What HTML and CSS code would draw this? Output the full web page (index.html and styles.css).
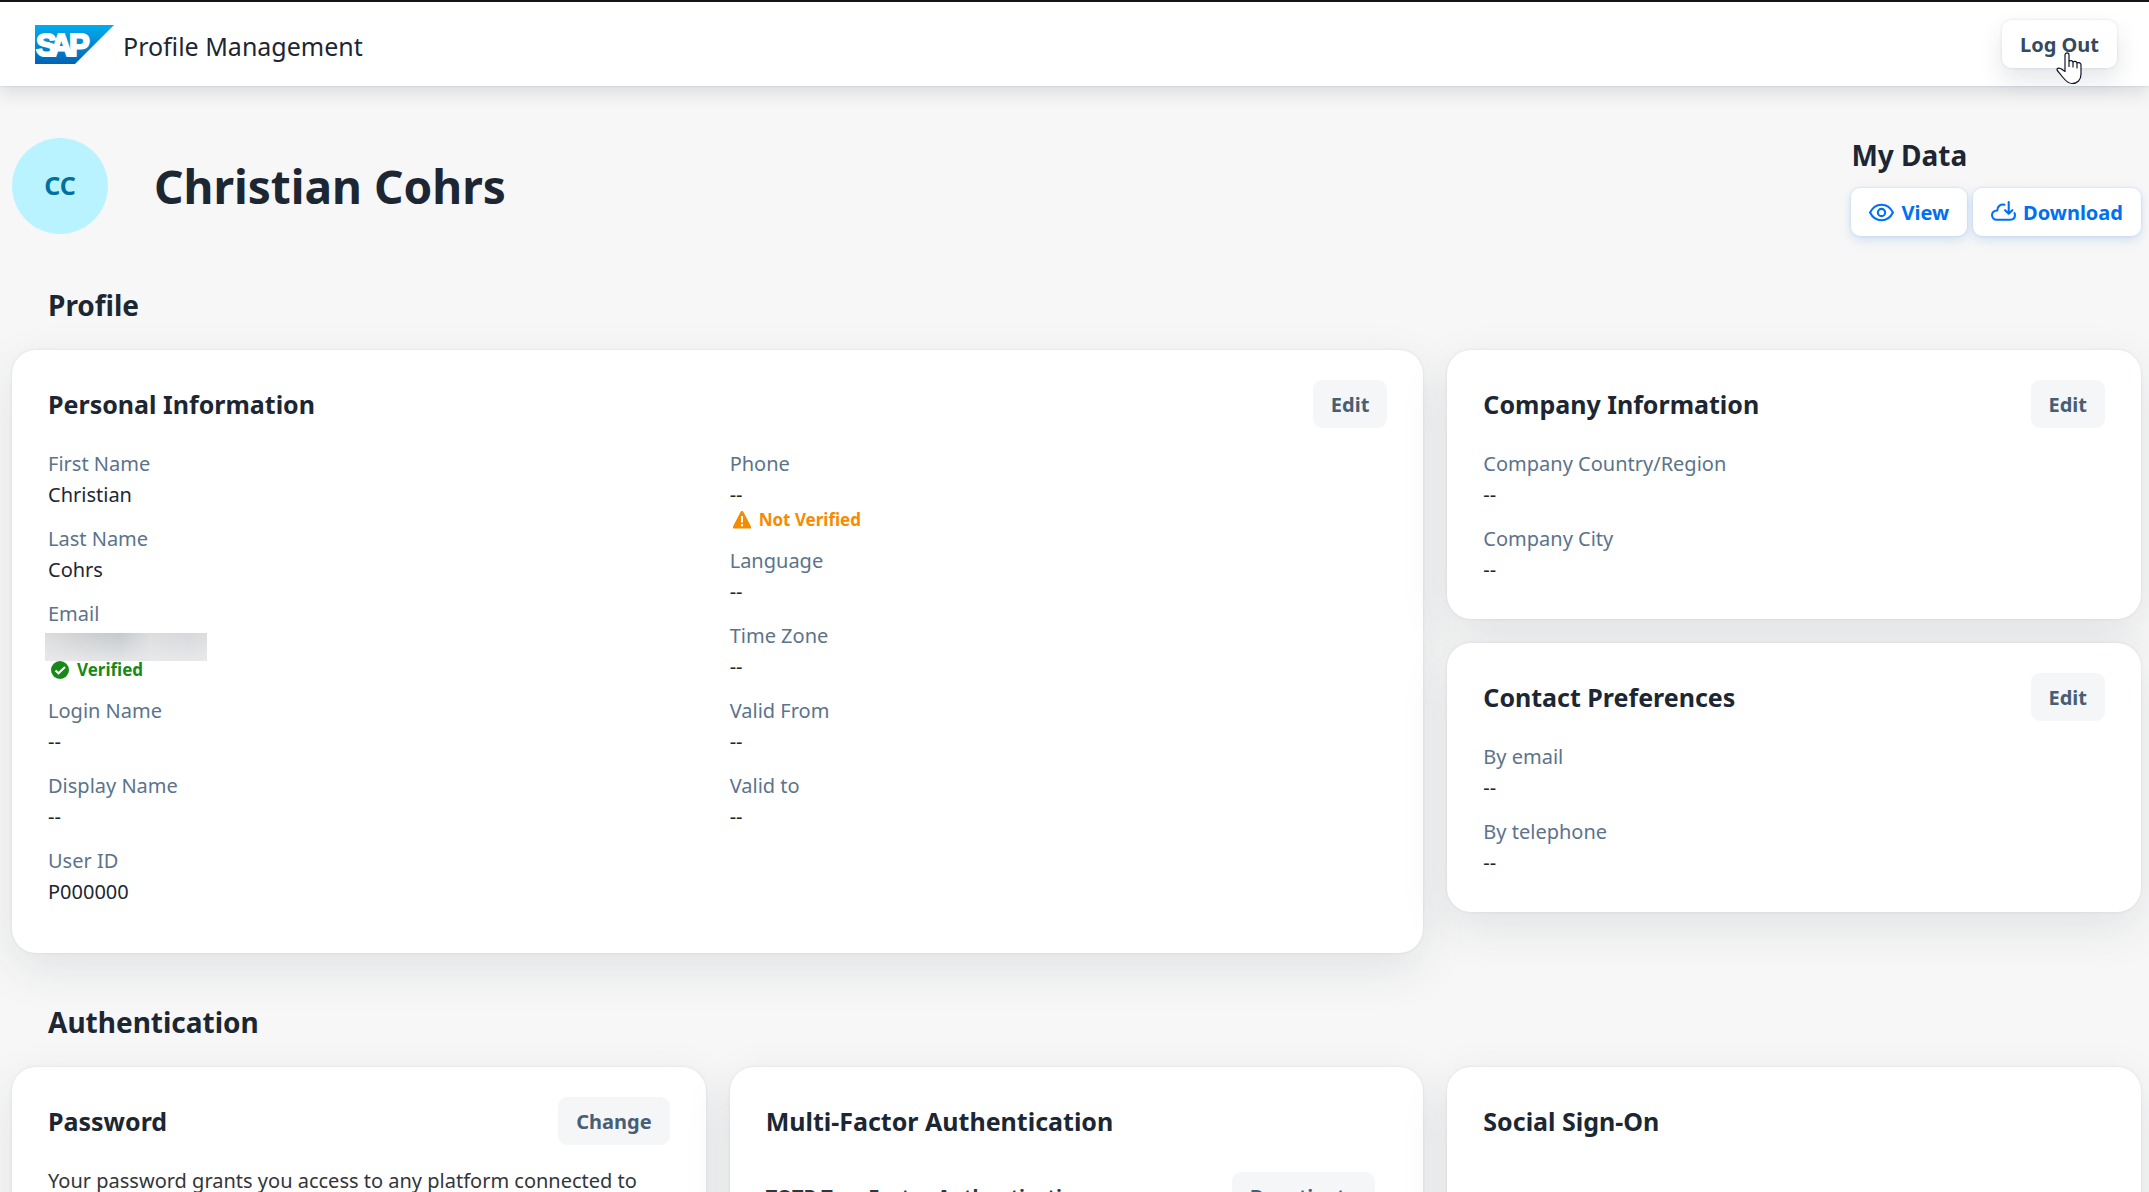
FILE: index.html
```html
<!DOCTYPE html>
<html lang="en">
<head>
<meta charset="utf-8">
<meta name="viewport" content="width=device-width, initial-scale=1">
<title>Profile Management</title>
<link rel="stylesheet" href="styles.css">
</head>
<body>
<header class="shell">
  <div class="brand">
    <svg class="logo" viewBox="0 0 79 39" role="img" aria-label="SAP">
      <defs>
        <linearGradient id="logo-fill" x1="0" y1="0" x2="0" y2="1">
          <stop offset="0" stop-color="#00aeef"/>
          <stop offset="0.5" stop-color="#0089d3"/>
          <stop offset="1" stop-color="#0062b3"/>
        </linearGradient>
      </defs>
      <path d="M0 0H79L40 39H0Z" fill="url(#logo-fill)"/>
      <text class="logo-text" x="1 15 34" y="31">SAP</text>
    </svg>
    <span class="product">Profile Management</span>
  </div>
  <button class="btn btn-raised" type="button">Log Out</button>
  <svg class="pointer" viewBox="0 0 26 33" aria-hidden="true">
    <path d="M9 20V3C9 .200 13 .200 13 3V14.500V9.500C13.500 8 17 8.300 17 10.500V15V10.500C17.500 8.800 21 9 21 11.500V16V11.500C21.500 9.800 25 10.500 25 13V22C25 28 21.500 31.500 16 31.500C12 31.500 9 28 7 25.500L1.300 18.500C.300 16.500 2.500 15.500 4.500 16.500L9 19.500" fill="#fff" stroke="#15152b" stroke-width="1.200" stroke-linejoin="round"/>
  </svg>
</header>

<main class="page">
  <div class="intro">
    <div class="identity">
      <span class="avatar" aria-hidden="true">CC</span>
      <h1 class="name">Christian Cohrs</h1>
    </div>
    <section class="my-data" aria-labelledby="my-data">
      <h2 class="heading" id="my-data">My Data</h2>
      <div class="actions">
        <button class="btn btn-action" type="button">
          <svg class="icon" viewBox="0 0 24 24" aria-hidden="true"><path d="M1 12C3.500 7 7.500 4.500 12 4.500S20.500 7 23 12C20.500 17 16.500 19.500 12 19.500S3.500 17 1 12Z"/><circle cx="12" cy="12" r="3.500"/></svg>
          View
        </button>
        <button class="btn btn-action" type="button">
          <svg class="icon" viewBox="0 0 24 24" aria-hidden="true"><path d="M13 4.500C9.500 3.500 6 6 6 10C3 10 1 12 1 14.500S3 19 5.500 19H18.500C21.500 19 23 17 23 14.500C23 13.500 22.800 13 22.500 12.500M17 2V13M13.500 9.800L17 13.200L20.500 9.800"/></svg>
          Download
        </button>
      </div>
    </section>
  </div>

  <section class="section" aria-labelledby="profile">
    <h2 class="heading section-heading" id="profile">Profile</h2>
    <div class="grid">
      <article class="card card-wide">
        <div class="card-head">
          <h3 class="card-title">Personal Information</h3>
          <button class="btn" type="button">Edit</button>
        </div>
        <div class="columns">
          <dl class="fields">
            <div class="field"><dt>First Name</dt><dd>Christian</dd></div>
            <div class="field"><dt>Last Name</dt><dd>Cohrs</dd></div>
            <div class="field">
              <dt>Email</dt>
              <dd><span class="redacted"></span></dd>
              <dd class="status status-ok">
                <svg class="status-icon" viewBox="0 0 18 18" aria-hidden="true"><circle cx="9" cy="9" r="9" fill="currentColor"/><path d="M4.500 9.500L7.500 12.300L14 6" fill="none" stroke="#fff" stroke-width="2"/></svg>
                Verified
              </dd>
            </div>
            <div class="field"><dt>Login Name</dt><dd>--</dd></div>
            <div class="field"><dt>Display Name</dt><dd>--</dd></div>
            <div class="field"><dt>User ID</dt><dd>P000000</dd></div>
          </dl>
          <dl class="fields">
            <div class="field">
              <dt>Phone</dt>
              <dd>--</dd>
              <dd class="status status-warn">
                <svg class="status-icon" viewBox="0 0 18 18" aria-hidden="true"><path d="M9 0C9.800 0 10.200 .400 10.600 1.200L17.700 15C18.500 16.800 17.800 17.500 16.500 17.500H1.500C.200 17.500-.500 16.800 .300 15L7.400 1.200C7.800 .400 8.200 0 9 0Z" fill="currentColor"/><path d="M9 5V11.500M9 13V15.200" stroke="#fff" stroke-width="2"/></svg>
                Not Verified
              </dd>
            </div>
            <div class="field"><dt>Language</dt><dd>--</dd></div>
            <div class="field"><dt>Time Zone</dt><dd>--</dd></div>
            <div class="field"><dt>Valid From</dt><dd>--</dd></div>
            <div class="field"><dt>Valid to</dt><dd>--</dd></div>
          </dl>
        </div>
      </article>

      <div class="stack">
        <article class="card">
          <div class="card-head">
            <h3 class="card-title">Company Information</h3>
            <button class="btn" type="button">Edit</button>
          </div>
          <dl class="fields">
            <div class="field"><dt>Company Country/Region</dt><dd>--</dd></div>
            <div class="field"><dt>Company City</dt><dd>--</dd></div>
          </dl>
        </article>
        <article class="card">
          <div class="card-head">
            <h3 class="card-title">Contact Preferences</h3>
            <button class="btn" type="button">Edit</button>
          </div>
          <dl class="fields">
            <div class="field"><dt>By email</dt><dd>--</dd></div>
            <div class="field"><dt>By telephone</dt><dd>--</dd></div>
          </dl>
        </article>
      </div>
    </div>
  </section>

  <section class="section" aria-labelledby="authentication">
    <h2 class="heading section-heading" id="authentication">Authentication</h2>
    <div class="grid">
      <article class="card">
        <div class="card-head">
          <h3 class="card-title">Password</h3>
          <button class="btn" type="button">Change</button>
        </div>
        <p class="text">Your password grants you access to any platform connected to</p>
      </article>
      <article class="card">
        <div class="card-head">
          <h3 class="card-title">Multi-Factor Authentication</h3>
        </div>
        <div class="method">
          <h4 class="method-name">TOTP Two-Factor Authentication</h4>
          <button class="btn" type="button">Deactivate</button>
        </div>
      </article>
      <article class="card">
        <div class="card-head">
          <h3 class="card-title">Social Sign-On</h3>
        </div>
      </article>
    </div>
  </section>
</main>
</body>
</html>
```
FILE: styles.css
```css
:root {
  --ink: #1c2733;
  --label: #5b738b;
  --button-ink: #475e75;
  --accent: #0070f2;
  --page: #f7f7f7;
}

* {
  box-sizing: border-box;
}

body {
  margin: 0;
  height: 100vh;
  overflow: hidden;
  background: var(--page);
  color: var(--ink);
  font: 400 20px/31px "Noto Sans", sans-serif;
}

h1, h2, h3, h4, p, dl, dd {
  margin: 0;
}

/* Top bar */
.shell {
  position: relative;
  display: flex;
  align-items: center;
  justify-content: space-between;
  height: 86px;
  padding: 0 32px 0 35px;
  border-top: 2px solid #15131c;
  background: #fff;
  box-shadow: 0 0 2px rgba(34, 53, 72, 0.2), 0 8px 16px rgba(34, 53, 72, 0.12);
}

.brand {
  display: flex;
  align-items: center;
  gap: 9px;
}

.logo {
  width: 79px;
  height: 39px;
}

.logo-text {
  fill: #fff;
  stroke: #fff;
  stroke-width: 2px;
  font: 700 31px "Liberation Sans", sans-serif;
}

.product {
  padding-top: 4px;
  font-size: 25px;
}

.pointer {
  position: absolute;
  top: 50px;
  right: 67px;
  width: 26px;
  height: 33px;
}

/* Buttons */
.btn {
  display: inline-flex;
  align-items: center;
  justify-content: center;
  gap: 7px;
  height: 48px;
  padding: 0 18px;
  border: 0;
  border-radius: 9px;
  background: #f5f6f7;
  color: var(--button-ink);
  font: 700 20px/31px "Noto Sans", sans-serif;
  white-space: nowrap;
}

.btn-raised {
  background: #fff;
  color: #354a5f;
  box-shadow: 0 0 3px rgba(34, 53, 72, 0.14), 0 12px 24px rgba(34, 53, 72, 0.12);
}

.btn-action {
  background: #fff;
  color: var(--accent);
  box-shadow: 0 0 3px rgba(0, 112, 210, 0.18), 0 4px 12px rgba(0, 112, 210, 0.16);
}

.icon {
  width: 25px;
  height: 25px;
  fill: none;
  stroke: currentColor;
  stroke-width: 2px;
  stroke-linecap: round;
  stroke-linejoin: round;
}

/* Page */
.page {
  padding: 49px 8px 49px 12px;
}

.intro {
  display: flex;
  align-items: center;
  justify-content: space-between;
}

.identity {
  display: flex;
  align-items: center;
  gap: 46px;
}

.avatar {
  display: grid;
  place-items: center;
  width: 96px;
  height: 96px;
  border-radius: 50%;
  background: #b9f3ff;
  color: #0070a0;
  font-size: 25px;
  font-weight: 700;
}

.name {
  font-size: 46px;
  font-weight: 700;
  line-height: 64px;
}

.heading {
  font-size: 28px;
  font-weight: 700;
  line-height: 40px;
}

.my-data {
  display: grid;
  gap: 13px;
}

.actions {
  display: flex;
  gap: 6px;
}

.section {
  margin-top: 49px;
}

.section-heading {
  margin: 0 0 25px 36px;
}

.grid {
  display: grid;
  grid-template-columns: repeat(3, minmax(0, 1fr));
  gap: 24px;
  align-items: start;
}

.section + .section .grid {
  align-items: stretch;
}

.stack {
  display: grid;
  gap: 24px;
}

/* Cards */
.card {
  padding: 30px 36px 33px;
  border-radius: 24px;
  background: #fff;
  box-shadow: 0 0 3px rgba(34, 53, 72, 0.1), 0 16px 48px rgba(34, 53, 72, 0.1);
}

.card-wide {
  grid-column: span 2;
}

.card-head {
  display: flex;
  align-items: center;
  justify-content: space-between;
  min-height: 48px;
  margin-bottom: 20px;
}

.card-title {
  font-size: 25px;
  font-weight: 700;
}

.columns {
  display: grid;
  grid-template-columns: repeat(2, minmax(0, 1fr));
  gap: 24px;
  padding-bottom: 12px;
}

.fields {
  display: flex;
  flex-direction: column;
  gap: 12px;
}

.field dt {
  color: var(--label);
}

.field dd {
  line-height: 32px;
}

.field .status {
  display: flex;
  align-items: center;
  gap: 8px;
  padding: 0 0 4px 3px;
  font-size: 17px;
  font-weight: 700;
  line-height: 18px;
}

.status-icon {
  width: 18px;
  height: 18px;
}

.status-ok {
  color: #188918;
}

.status-warn {
  color: #f58b00;
}

.redacted {
  display: block;
  width: 162px;
  height: 28px;
  margin: 4px 0 0 -3px;
  background:
    linear-gradient(to bottom, rgba(235, 236, 238, 0), rgba(235, 236, 238, 0.8)),
    linear-gradient(to right, #dcdddf 0%, #d0d2d4 20%, #c4c9cc 46%, #dcdddf 65%, #d6d8db 88%, #dcdddf 100%);
}

.text {
  color: #32363a;
}

.method {
  display: flex;
  align-items: center;
  justify-content: space-between;
  padding: 7px 12px 0 0;
}

.method-name {
  color: #32363a;
  font-size: 20px;
  font-weight: 700;
}
```
